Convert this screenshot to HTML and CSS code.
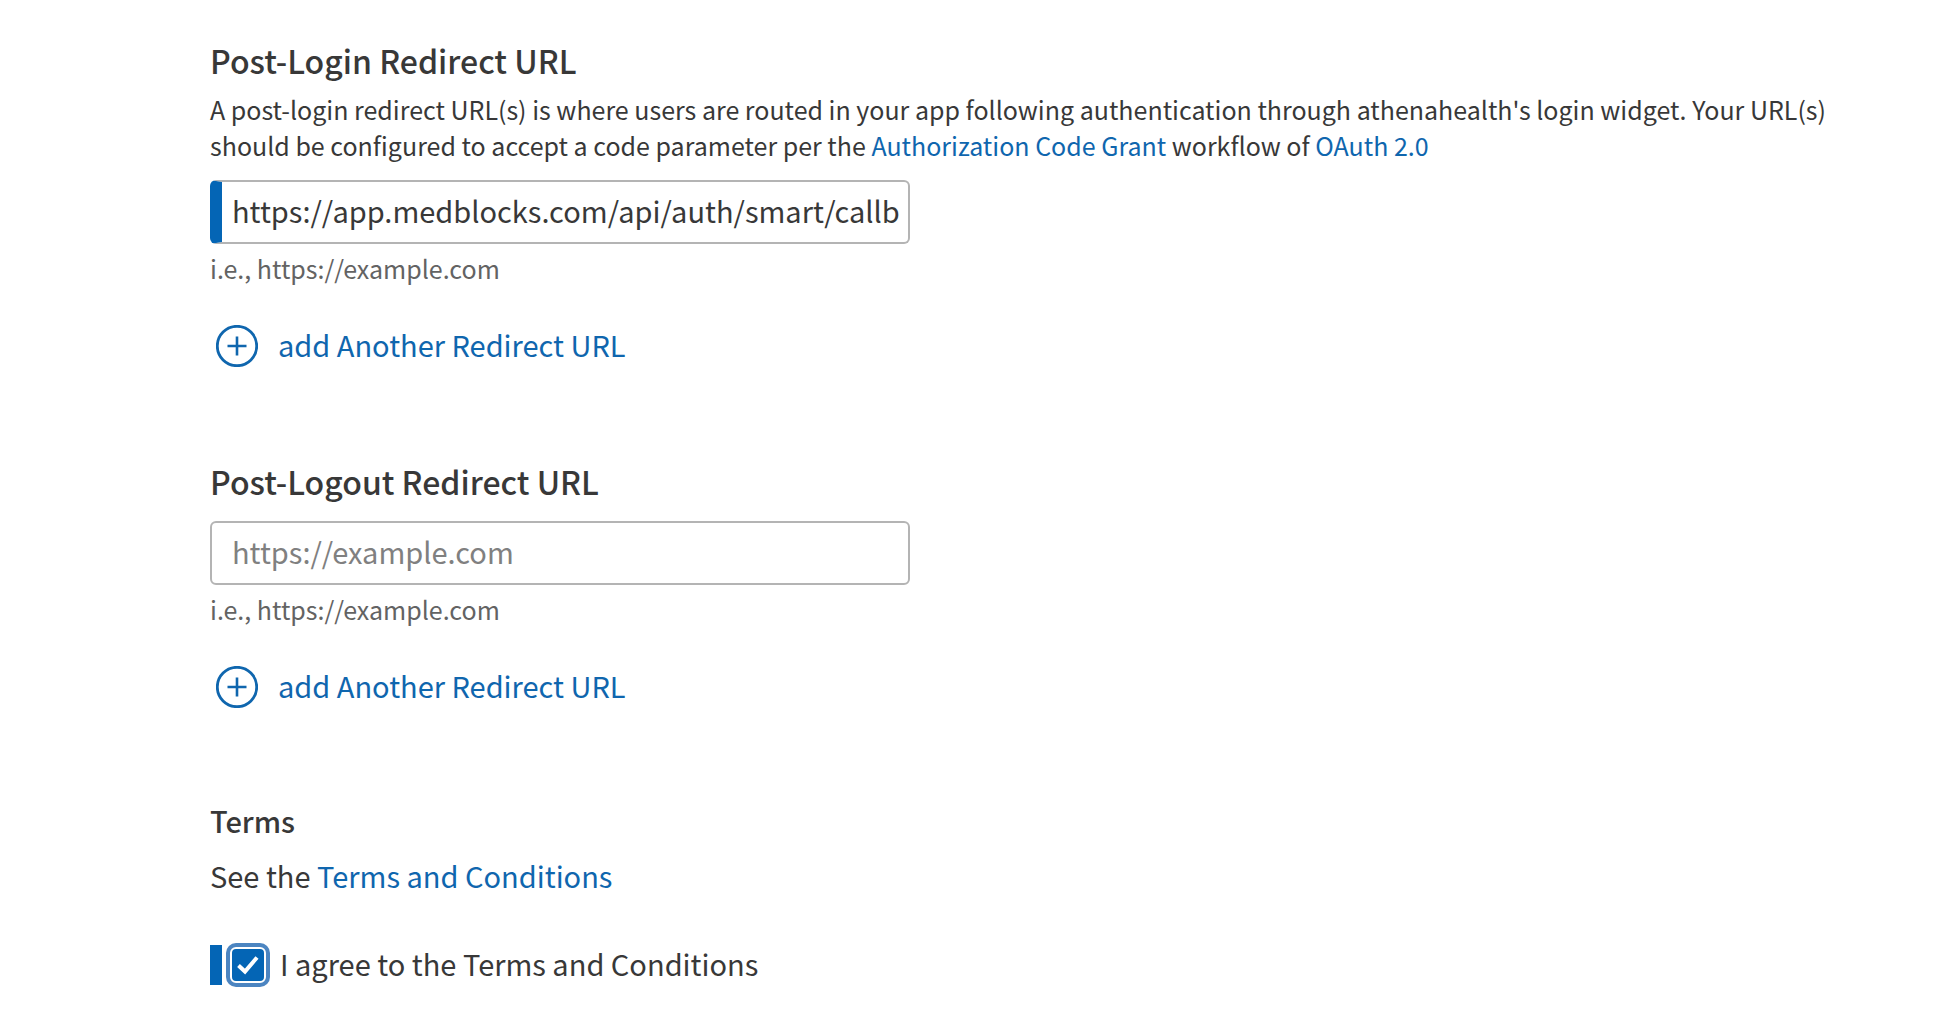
FILE: index.html
```html
<!DOCTYPE html>
<html lang="en">
<head>
  <meta charset="UTF-8">
  <meta name="viewport" content="width=device-width, initial-scale=1.0">
  <title>App Settings</title>
  <link rel="stylesheet" href="styles.css">
</head>
<body>

  <form class="settings">

    <!-- Post-login -->
    <section class="url-section">
      <h2><label for="login-url">Post-Login Redirect URL</label></h2>
      <p class="description">A post-login redirect URL(s) is where users are routed in your app following authentication through athenahealth's login widget. Your URL(s) should be configured to accept a code parameter per the <a href="#">Authorization Code Grant</a> workflow of <a href="#">OAuth 2.0</a></p>
      <input type="text" id="login-url" class="url-input changed" value="https://app.medblocks.com/api/auth/smart/callback" aria-describedby="login-hint">
      <p class="hint" id="login-hint">i.e., https://example.com</p>
      <button type="button" class="add-button">
        <svg width="42" height="42" viewBox="0 0 42 42" fill="none" stroke="currentColor" aria-hidden="true">
          <circle cx="21" cy="21" r="19.7" stroke-width="2.8"/>
          <path d="M21 11.5v19M11.5 21h19" stroke-width="2.6"/>
        </svg>
        add Another Redirect URL
      </button>
    </section>

    <!-- Post-logout -->
    <section class="url-section">
      <h2><label for="logout-url">Post-Logout Redirect URL</label></h2>
      <input type="text" id="logout-url" class="url-input" placeholder="https://example.com" aria-describedby="logout-hint">
      <p class="hint" id="logout-hint">i.e., https://example.com</p>
      <button type="button" class="add-button">
        <svg width="42" height="42" viewBox="0 0 42 42" fill="none" stroke="currentColor" aria-hidden="true">
          <circle cx="21" cy="21" r="19.7" stroke-width="2.8"/>
          <path d="M21 11.5v19M11.5 21h19" stroke-width="2.6"/>
        </svg>
        add Another Redirect URL
      </button>
    </section>

    <!-- Terms -->
    <section class="terms">
      <h3>Terms</h3>
      <p>See the <a href="#">Terms and Conditions</a></p>
      <div class="agree">
        <span class="checkbox">
          <input type="checkbox" id="agree" checked>
          <svg width="24" height="20" viewBox="0 0 24 20" fill="none" stroke="#fff" stroke-width="4" aria-hidden="true">
            <path d="M2.5 10.5l6.5 6L21 2.5"/>
          </svg>
        </span>
        <label for="agree">I agree to the Terms and Conditions</label>
      </div>
    </section>

  </form>

</body>
</html>
```
FILE: styles.css
```css
* {
  box-sizing: border-box;
}

body {
  margin: 0;
  background-color: #fff;
  color: #383838;
  font-family: "Noto Sans CJK SC", sans-serif;
  font-size: 29px;
  line-height: 40px;
}

h2,
h3,
p {
  margin: 0;
}

a {
  color: #0f66ae;
  text-decoration: none;
}

.settings {
  padding: 40px 120px 40px 210px;
}

.url-section {
  margin-bottom: 94px;
}

h2 {
  font-size: 32px;
  font-weight: 500;
}

h3 {
  font-size: 29px;
  font-weight: 500;
  line-height: 36px;
}

.description {
  margin-top: 11px;
  font-size: 25px;
  line-height: 36px;
}

/* URL fields */
.url-input {
  display: block;
  width: 100%;
  max-width: 700px;
  height: 64px;
  margin-top: 20px;
  padding: 0 9px 4px 20px;
  border: 2px solid #b4b4b4;
  border-radius: 6px;
  background-color: #fff;
  color: #383838;
  font-family: inherit;
  font-size: 29px;
}

.description + .url-input {
  margin-top: 17px;
}

/* Blue bar on the left of an edited field */
.url-input.changed {
  padding-left: 10px;
  border-left: 12px solid #0465b5;
}

.url-input::placeholder {
  color: #808080;
  opacity: 1;
}

.hint {
  margin-top: 6px;
  color: #636363;
  font-size: 25px;
  line-height: 36px;
}

.add-button {
  display: flex;
  align-items: flex-start;
  gap: 20px;
  margin-top: 39px;
  padding: 0 6px;
  border: 0;
  background: none;
  color: #0f66ae;
  font-family: inherit;
  font-size: 29px;
  line-height: 38px;
  cursor: pointer;
}

/* Terms */
.terms p {
  margin-top: 17px;
}

.agree {
  display: flex;
  align-items: center;
  gap: 14px;
  margin-top: 50px;
  padding-left: 8px;
  border-left: 12px solid #0465b5;
}

.agree label {
  padding-bottom: 4px;
  line-height: 36px;
}

.checkbox {
  display: grid;
  place-items: center;
}

.checkbox input,
.checkbox svg {
  grid-area: 1 / 1;
}

.checkbox svg {
  pointer-events: none;
}

.checkbox input {
  appearance: none;
  width: 36px;
  height: 36px;
  margin: 0;
  border: 2px solid #fff;
  border-radius: 6px;
  background-color: #fff;
  box-shadow: 0 0 0 4px #4c85c1;
}

.checkbox input:checked {
  background-color: #0465b5;
}
```
